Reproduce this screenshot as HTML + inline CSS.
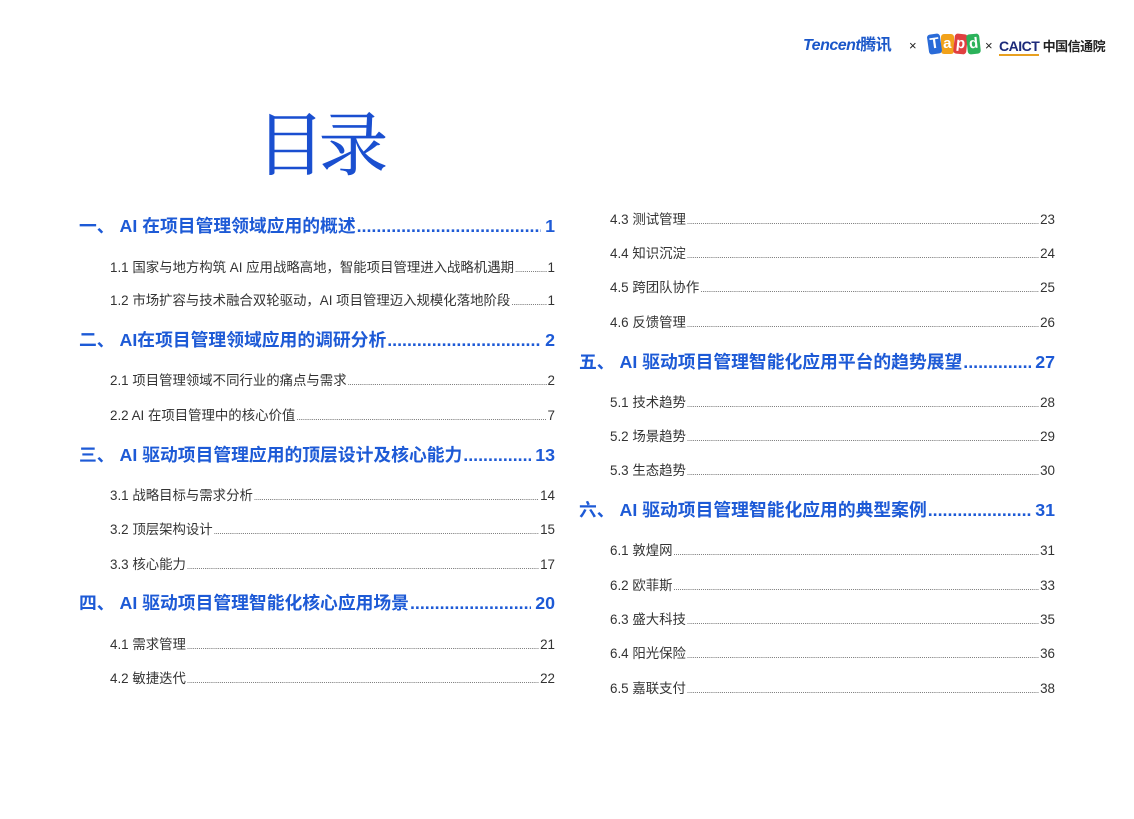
<!DOCTYPE html>
<html><head><meta charset="utf-8"><style>
*{margin:0;padding:0;box-sizing:border-box}
body{width:1134px;height:819px;background:#fff;position:relative;overflow:hidden;font-family:"Liberation Sans","Noto Sans CJK SC",sans-serif}
.t{position:absolute;left:256px;top:105px;font-family:"Liberation Serif","Noto Serif CJK SC",serif;font-size:69px;color:#1a4fd0;letter-spacing:-6px;line-height:1.2;-webkit-text-stroke:0.6px #1a4fd0}
.r{position:absolute;display:flex;align-items:baseline;white-space:nowrap;overflow:hidden}
.r .d{flex:1 1 0;min-width:0;overflow:hidden;white-space:nowrap;margin:0 1px}
.h{font-size:17.8px;font-weight:bold;color:#1d5ad6;height:26px;line-height:26px}
.h .d{margin-right:4px}
.s{font-size:13.4px;color:#333;height:18px;line-height:18px}
.s .d{font-size:8px;letter-spacing:-0.3px;color:#444}
.logo{position:absolute;top:36px;font-size:15px;line-height:20px;white-space:nowrap}
</style></head><body>
<div class="logo" style="left:803px;color:#1b57c9;font-weight:bold;font-style:italic;font-size:16px;letter-spacing:-0.5px">Tencent<span style="font-style:normal">腾讯</span></div>
<div class="logo" style="left:909px;color:#222;font-size:13px">×</div>
<div class="logo" style="left:928px;top:34px;font-weight:bold;font-size:15px"><span style="background:#2a6bd8;color:#fff;padding:0 2px;border-radius:3px;display:inline-block;transform:rotate(-8deg)">T</span><span style="background:#f2a21a;color:#fff;padding:0 2px;border-radius:3px;display:inline-block">a</span><span style="background:#e04040;color:#fff;padding:0 2px;border-radius:3px;display:inline-block;transform:rotate(6deg)">p</span><span style="background:#2bb25a;color:#fff;padding:0 2px;border-radius:3px;display:inline-block;transform:rotate(-6deg)">d</span></div>
<div class="logo" style="left:985px;color:#222;font-size:13px">×</div>
<div class="logo" style="left:999px;color:#1c2a7a;font-weight:bold;font-size:14px;letter-spacing:-0.5px"><span style="border-bottom:2px solid #e8a020">CAICT</span> <span style="color:#222;font-size:13px">中国信通院</span></div>
<div class="t">目录</div>

<div class="r h" style="left:79px;width:476px;top:213px"><span>一、 AI 在项目管理领域应用的概述</span><span class="d">........................................................................................................................................................</span><span>1</span></div>
<div class="r s" style="left:110px;width:445px;top:259px"><span>1.1 国家与地方构筑 AI 应用战略高地，智能项目管理进入战略机遇期</span><span class="d">..........................................................................................................................................................................................................................................................................</span><span>1</span></div>
<div class="r s" style="left:110px;width:445px;top:292px"><span>1.2 市场扩容与技术融合双轮驱动，AI 项目管理迈入规模化落地阶段</span><span class="d">..........................................................................................................................................................................................................................................................................</span><span>1</span></div>
<div class="r h" style="left:79px;width:476px;top:327px"><span>二、 AI在项目管理领域应用的调研分析</span><span class="d">........................................................................................................................................................</span><span>2</span></div>
<div class="r s" style="left:110px;width:445px;top:372px"><span>2.1 项目管理领域不同行业的痛点与需求</span><span class="d">..........................................................................................................................................................................................................................................................................</span><span>2</span></div>
<div class="r s" style="left:110px;width:445px;top:407px"><span>2.2 AI 在项目管理中的核心价值</span><span class="d">..........................................................................................................................................................................................................................................................................</span><span>7</span></div>
<div class="r h" style="left:79px;width:476px;top:442px"><span>三、 AI 驱动项目管理应用的顶层设计及核心能力</span><span class="d">........................................................................................................................................................</span><span>13</span></div>
<div class="r s" style="left:110px;width:445px;top:487px"><span>3.1 战略目标与需求分析</span><span class="d">..........................................................................................................................................................................................................................................................................</span><span>14</span></div>
<div class="r s" style="left:110px;width:445px;top:521px"><span>3.2 顶层架构设计</span><span class="d">..........................................................................................................................................................................................................................................................................</span><span>15</span></div>
<div class="r s" style="left:110px;width:445px;top:556px"><span>3.3 核心能力</span><span class="d">..........................................................................................................................................................................................................................................................................</span><span>17</span></div>
<div class="r h" style="left:79px;width:476px;top:590px"><span>四、 AI 驱动项目管理智能化核心应用场景</span><span class="d">........................................................................................................................................................</span><span>20</span></div>
<div class="r s" style="left:110px;width:445px;top:636px"><span>4.1 需求管理</span><span class="d">..........................................................................................................................................................................................................................................................................</span><span>21</span></div>
<div class="r s" style="left:110px;width:445px;top:670px"><span>4.2 敏捷迭代</span><span class="d">..........................................................................................................................................................................................................................................................................</span><span>22</span></div>

<div class="r s" style="left:610px;width:445px;top:211px"><span>4.3 测试管理</span><span class="d">..........................................................................................................................................................................................................................................................................</span><span>23</span></div>
<div class="r s" style="left:610px;width:445px;top:245px"><span>4.4 知识沉淀</span><span class="d">..........................................................................................................................................................................................................................................................................</span><span>24</span></div>
<div class="r s" style="left:610px;width:445px;top:279px"><span>4.5 跨团队协作</span><span class="d">..........................................................................................................................................................................................................................................................................</span><span>25</span></div>
<div class="r s" style="left:610px;width:445px;top:314px"><span>4.6 反馈管理</span><span class="d">..........................................................................................................................................................................................................................................................................</span><span>26</span></div>
<div class="r h" style="left:579px;width:476px;top:349px"><span>五、 AI 驱动项目管理智能化应用平台的趋势展望</span><span class="d">........................................................................................................................................................</span><span>27</span></div>
<div class="r s" style="left:610px;width:445px;top:394px"><span>5.1 技术趋势</span><span class="d">..........................................................................................................................................................................................................................................................................</span><span>28</span></div>
<div class="r s" style="left:610px;width:445px;top:428px"><span>5.2 场景趋势</span><span class="d">..........................................................................................................................................................................................................................................................................</span><span>29</span></div>
<div class="r s" style="left:610px;width:445px;top:462px"><span>5.3 生态趋势</span><span class="d">..........................................................................................................................................................................................................................................................................</span><span>30</span></div>
<div class="r h" style="left:579px;width:476px;top:497px"><span>六、 AI 驱动项目管理智能化应用的典型案例</span><span class="d">........................................................................................................................................................</span><span>31</span></div>
<div class="r s" style="left:610px;width:445px;top:542px"><span>6.1 敦煌网</span><span class="d">..........................................................................................................................................................................................................................................................................</span><span>31</span></div>
<div class="r s" style="left:610px;width:445px;top:577px"><span>6.2 欧菲斯</span><span class="d">..........................................................................................................................................................................................................................................................................</span><span>33</span></div>
<div class="r s" style="left:610px;width:445px;top:611px"><span>6.3 盛大科技</span><span class="d">..........................................................................................................................................................................................................................................................................</span><span>35</span></div>
<div class="r s" style="left:610px;width:445px;top:645px"><span>6.4 阳光保险</span><span class="d">..........................................................................................................................................................................................................................................................................</span><span>36</span></div>
<div class="r s" style="left:610px;width:445px;top:680px"><span>6.5 嘉联支付</span><span class="d">..........................................................................................................................................................................................................................................................................</span><span>38</span></div>
</body></html>
